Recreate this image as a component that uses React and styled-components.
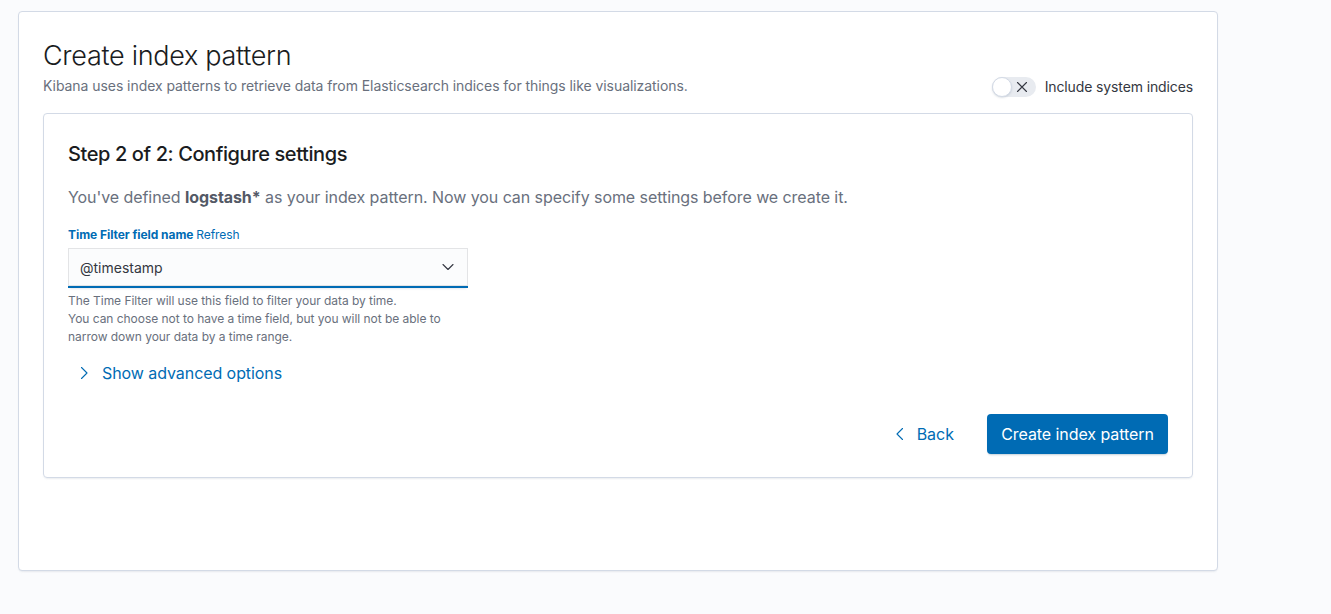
import React from "react";
import styled, { createGlobalStyle } from "styled-components";

const Global = createGlobalStyle`
  html, body { margin: 0; padding: 0; background: #fafbfd; }
  body { font-family: Inter, "Noto Sans", sans-serif; color: #343741; -webkit-font-smoothing: antialiased; }
  * { box-sizing: border-box; }
`;

const Page = styled.div`
  padding: 11px 0 0 18px;
  min-height: 614px;
`;

const Panel = styled.div`
  width: 1200px;
  height: 560px;
  background: #fff;
  border: 1px solid #d3dae6;
  border-radius: 4px;
  box-shadow: 0 1px 2px -1px rgba(152, 162, 179, 0.3), 0 2px 3px -2px rgba(152, 162, 179, 0.2);
  padding: 24px;
`;

const Header = styled.div`
  display: flex;
  justify-content: space-between;
  align-items: flex-end;
`;

const Title = styled.h1`
  margin: 2px 0 0;
  font-size: 27px;
  line-height: 36px;
  font-weight: 300;
  color: #1a1c21;
  letter-spacing: -0.3px;
`;

const Subtitle = styled.p`
  margin: 2px 0 0;
  font-size: 14px;
  line-height: 20px;
  color: #69707d;
  letter-spacing: -0.06px;
`;

const SwitchWrap = styled.label`
  display: flex;
  align-items: center;
  gap: 9px;
  font-size: 14px;
  line-height: 20px;
  color: #343741;
  letter-spacing: -0.12px;
  margin-bottom: -1px;
`;

const SwitchTrack = styled.span`
  position: relative;
  display: inline-flex;
  align-items: center;
  justify-content: flex-end;
  width: 44px;
  height: 20px;
  border-radius: 20px;
  background: #e8ebf0;
  padding-right: 8px;
`;

const SwitchKnob = styled.span`
  position: absolute;
  left: 0;
  top: 0;
  width: 20px;
  height: 20px;
  border-radius: 50%;
  background: #fff;
  border: 1px solid #d3dae6;
  box-shadow: 0 1px 2px rgba(152, 162, 179, 0.35);
`;

const Inner = styled.div`
  margin-top: 17px;
  height: 365px;
  border: 1px solid #d3dae6;
  border-radius: 4px;
  box-shadow: 0 1px 2px -1px rgba(152, 162, 179, 0.3), 0 2px 3px -2px rgba(152, 162, 179, 0.2);
  padding: 24px;
  display: flex;
  flex-direction: column;
`;

const StepTitle = styled.h2`
  margin: 2px 0 0;
  font-size: 20px;
  line-height: 28px;
  font-weight: 500;
  color: #1a1c21;
  letter-spacing: -0.4px;
`;

const Lead = styled.p`
  margin: 17px 0 0;
  font-size: 16px;
  line-height: 24px;
  color: #69707d;
  letter-spacing: -0.07px;
  b { color: #535966; font-weight: 700; }
`;

const FormRow = styled.div`
  margin-top: 16px;
  width: 400px;
`;

const Label = styled.div`
  font-size: 12px;
  line-height: 20px;
  margin-bottom: 3px;
  color: #006bb4;
  font-weight: 700;
  letter-spacing: -0.05px;
  span { font-weight: 400; }
`;

const Select = styled.div`
  height: 40px;
  display: flex;
  align-items: center;
  justify-content: space-between;
  padding: 0 12px 0 12px;
  background: #fbfcfd;
  box-shadow: 0 1px 1px -1px rgba(152, 162, 179, 0.2), 0 3px 2px -2px rgba(152, 162, 179, 0.2),
    inset 0 0 0 1px rgba(16, 22, 26, 0.1);
  border-bottom: 2px solid #006bb4;
  font-size: 14px;
  color: #343741;
`;

const Help = styled.div`
  margin-top: 4px;
  font-size: 12px;
  line-height: 18px;
  color: #69707d;
  letter-spacing: -0.04px;
`;

const Advanced = styled.div`
  margin-top: 15px;
  margin-left: 8px;
  display: flex;
  align-items: center;
  gap: 10px;
  font-size: 16px;
  line-height: 24px;
  color: #006bb4;
  letter-spacing: -0.07px;
`;

const Footer = styled.div`
  margin-top: auto;
  margin-bottom: -1px;
  display: flex;
  justify-content: flex-end;
  align-items: center;
  gap: 33px;
`;

const BackLink = styled.div`
  display: flex;
  align-items: center;
  gap: 9px;
  font-size: 16px;
  color: #006bb4;
`;

const Button = styled.div`
  height: 40px;
  width: 181px;
  border-radius: 4px;
  background: #006bb4;
  color: #fff;
  font-size: 16px;
  letter-spacing: -0.07px;
  display: flex;
  align-items: center;
  justify-content: center;
  box-shadow: 0 2px 2px -1px rgba(54, 97, 126, 0.3);
`;

const paths = {
  down: "M3 5.5 L8 10.5 L13 5.5",
  right: "M5.5 2.5 L11 8 L5.5 13.5",
  left: "M10.5 2.5 L5 8 L10.5 13.5",
};

const Chevron = ({ dir = "down" }) => (
  <svg width="16" height="16" viewBox="0 0 16 16" fill="none">
    <path d={paths[dir]} stroke="currentColor" strokeWidth="1.1" strokeLinecap="round" strokeLinejoin="round" />
  </svg>
);

export default function App() {
  return (
    <>
      <Global />
      <Page>
        <Panel>
          <Header>
            <div>
              <Title>Create index pattern</Title>
              <Subtitle>
                Kibana uses index patterns to retrieve data from Elasticsearch indices for things like visualizations.
              </Subtitle>
            </div>
            <SwitchWrap>
              <SwitchTrack>
                <SwitchKnob />
                <svg width="12" height="12" viewBox="0 0 12 12">
                  <path d="M1.5 1.5 L10.5 10.5 M10.5 1.5 L1.5 10.5" stroke="#343741" strokeWidth="1.1" strokeLinecap="round" />
                </svg>
              </SwitchTrack>
              Include system indices
            </SwitchWrap>
          </Header>
          <Inner>
            <StepTitle>Step 2 of 2: Configure settings</StepTitle>
            <Lead>
              You've defined <b>logstash*</b> as your index pattern. Now you can specify some settings before we create it.
            </Lead>
            <FormRow>
              <Label>
                Time Filter field name <span>Refresh</span>
              </Label>
              <Select>
                @timestamp
                <Chevron dir="down" />
              </Select>
              <Help>
                The Time Filter will use this field to filter your data by time.
                <br />
                You can choose not to have a time field, but you will not be able to
                <br />
                narrow down your data by a time range.
              </Help>
            </FormRow>
            <Advanced>
              <Chevron dir="right" />
              Show advanced options
            </Advanced>
            <Footer>
              <BackLink>
                <Chevron dir="left" />
                Back
              </BackLink>
              <Button>Create index pattern</Button>
            </Footer>
          </Inner>
        </Panel>
      </Page>
    </>
  );
}
